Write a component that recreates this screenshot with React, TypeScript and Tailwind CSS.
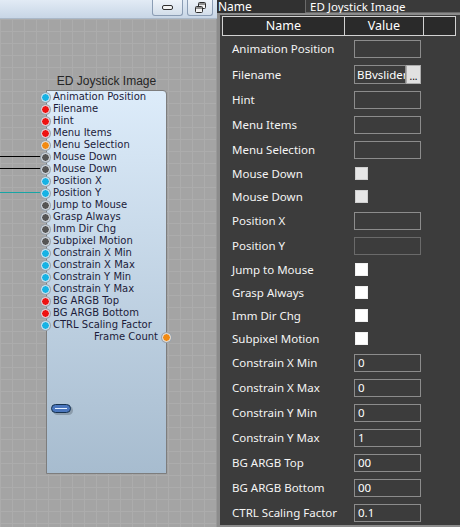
import React from "react";

type PinColor = "cyan" | "red" | "orange" | "gray";

const pinClass: Record<PinColor, string> = {
  cyan: "bg-[#16b2e4]",
  red: "bg-[#ee1111]",
  orange: "bg-[#f28a12]",
  gray: "bg-[#555555]",
};

const inputs: [string, PinColor][] = [
  ["Animation Position", "cyan"],
  ["Filename", "red"],
  ["Hint", "red"],
  ["Menu Items", "red"],
  ["Menu Selection", "orange"],
  ["Mouse Down", "gray"],
  ["Mouse Down", "gray"],
  ["Position X", "cyan"],
  ["Position Y", "cyan"],
  ["Jump to Mouse", "gray"],
  ["Grasp Always", "gray"],
  ["Imm Dir Chg", "gray"],
  ["Subpixel Motion", "gray"],
  ["Constrain X Min", "cyan"],
  ["Constrain X Max", "cyan"],
  ["Constrain Y Min", "cyan"],
  ["Constrain Y Max", "cyan"],
  ["BG ARGB Top", "red"],
  ["BG ARGB Bottom", "red"],
  ["CTRL Scaling Factor", "cyan"],
];

type Prop =
  | { name: string; kind: "text"; value?: string; dim?: boolean }
  | { name: string; kind: "file"; value: string }
  | { name: string; kind: "check"; disabled?: boolean };

const props: Prop[] = [
  { name: "Animation Position", kind: "text" },
  { name: "Filename", kind: "file", value: "BBvslider" },
  { name: "Hint", kind: "text" },
  { name: "Menu Items", kind: "text" },
  { name: "Menu Selection", kind: "text" },
  { name: "Mouse Down", kind: "check", disabled: true },
  { name: "Mouse Down", kind: "check", disabled: true },
  { name: "Position X", kind: "text" },
  { name: "Position Y", kind: "text", dim: true },
  { name: "Jump to Mouse", kind: "check" },
  { name: "Grasp Always", kind: "check" },
  { name: "Imm Dir Chg", kind: "check" },
  { name: "Subpixel Motion", kind: "check" },
  { name: "Constrain X Min", kind: "text", value: "0" },
  { name: "Constrain X Max", kind: "text", value: "0" },
  { name: "Constrain Y Min", kind: "text", value: "0" },
  { name: "Constrain Y Max", kind: "text", value: "1" },
  { name: "BG ARGB Top", kind: "text", value: "00" },
  { name: "BG ARGB Bottom", kind: "text", value: "00" },
  { name: "CTRL Scaling Factor", kind: "text", value: "0.1" },
];

function Pin({ color }: { color: PinColor }) {
  return (
    <span
      className={`h-[9px] w-[9px] shrink-0 rounded-full border border-[#e8eef5] shadow-[0_0_0_1px_#9aa4ae] ${pinClass[color]}`}
    />
  );
}

function Node() {
  return (
    <div className="absolute left-[46px] top-[55px] w-[121px]">
      <div className="mb-[2px] h-[14px] whitespace-nowrap text-center font-['Liberation_Sans',sans-serif] text-[12px] leading-[14px] text-[#262626]">
        ED Joystick Image
      </div>
      <div className="flex h-[384px] flex-col rounded-tr-[4px] border border-[#7d7d7d] bg-gradient-to-b from-[#ddecfa] to-[#a7bccf] font-['DejaVu_Sans',sans-serif] text-[10px] text-[#1c1c3a]">
        {inputs.map(([label, color], i) => (
          <div key={i} className="-ml-[6px] flex h-[12px] items-center gap-[3px] whitespace-nowrap leading-[12px]">
            <Pin color={color} />
            <span>{label}</span>
          </div>
        ))}
        <div className="-mr-[5px] flex h-[12px] items-center justify-end gap-[4px] whitespace-nowrap leading-[12px]">
          <span>Frame Count</span>
          <Pin color="orange" />
        </div>
        {/* joystick preview */}
        <div className="ml-[4px] mt-[61px] flex h-[9px] w-[20px] items-center rounded-full border border-[#16324f] bg-[#4a76bd] px-[3px] shadow-[2px_2px_0_#8b9cac]">
          <span className="h-px w-full bg-[#e6f0ff]" />
        </div>
      </div>
    </div>
  );
}

function Designer() {
  return (
    <div className="flex w-[217px] shrink-0 flex-col">
      <div className="flex h-[19px] justify-end gap-[4px] border-b border-[#aab8c8] bg-gradient-to-b from-[#e2ebf5] to-[#c8d6e6] pr-[4px]">
        <div className="flex h-[16px] w-[31px] items-center justify-center rounded-b-[3px] border border-t-0 border-[#8b9db4] bg-gradient-to-b from-[#eef3f9] to-[#d3deea]">
          <span className="h-[5px] w-[11px] rounded-[2px] border border-[#2e2e2e] bg-[#f4f4f4]" />
        </div>
        <div className="flex h-[16px] w-[26px] items-center justify-center rounded-b-[3px] border border-t-0 border-[#8b9db4] bg-gradient-to-b from-[#eef3f9] to-[#d3deea]">
          <svg width="11" height="11" viewBox="0 0 11 11">
            <rect x="3.5" y="0.5" width="7" height="6" rx="1" fill="#f4f4f4" stroke="#2e2e2e" />
            <rect x="0.5" y="4.5" width="7" height="6" rx="1" fill="#f4f4f4" stroke="#2e2e2e" />
            <line x1="1" y1="6" x2="7" y2="6" stroke="#2e2e2e" />
            <line x1="4" y1="2" x2="10" y2="2" stroke="#2e2e2e" />
          </svg>
        </div>
      </div>
      <div className="relative flex-1 border-r border-[#999] bg-[#a4a4a4] bg-[linear-gradient(to_right,#acacac_1px,transparent_1px),linear-gradient(to_bottom,#acacac_1px,transparent_1px)] bg-[size:12px_12px]">
        {/* wires */}
        <div className="absolute left-0 top-[137px] h-px w-[41px] bg-black" />
        <div className="absolute left-0 top-[149px] h-px w-[41px] bg-black" />
        <div className="absolute left-0 top-[173px] h-px w-[41px] bg-[#17a5a5]" />
        <Node />
      </div>
    </div>
  );
}

function PropRow({ p }: { p: Prop }) {
  const h = p.kind === "check" ? "h-[23px]" : p.kind === "file" ? "h-[26px]" : "h-[25px]";
  return (
    <div className={`flex items-center ${h}`}>
      <div className="w-[132px] whitespace-nowrap pl-[10px] pt-px text-[11.5px] text-[#f4f4f4]">{p.name}</div>
      {p.kind === "text" && (
        <div
          className={`h-[18px] w-[67px] border px-[3px] text-[11.5px] leading-[16px] text-white ${
            p.dim ? "border-[#6a6a6a]" : "border-[#8c8c8c]"
          }`}
        >
          {p.value}
        </div>
      )}
      {p.kind === "file" && (
        <div className="flex h-[19px] w-[67px]">
          <div className="w-[52px] overflow-hidden whitespace-nowrap border border-[#8c8c8c] px-[2px] text-[11.5px] leading-[17px] text-white">
            {p.value}
          </div>
          <div className="flex w-[15px] items-end justify-center border border-[#adadad] bg-[#e1e1e1] pb-[3px] text-[10px] leading-[8px] text-black">
            ...
          </div>
        </div>
      )}
      {p.kind === "check" && (
        <div
          className={`ml-px h-[13px] w-[13px] border ${
            p.disabled ? "border-[#cfcfcf] bg-[#e6e6e6]" : "border-[#f0f0f0] bg-white"
          }`}
        />
      )}
    </div>
  );
}

function PropertyPanel() {
  return (
    <div className="flex flex-1 flex-col bg-[#3c3c3c] font-['Noto_Sans',sans-serif]">
      <div className="flex h-[13px] bg-[#313131] text-white">
        <div className="w-[88px] pl-px text-[12px] leading-[13px]">Name</div>
        <div className="flex-1 whitespace-nowrap border-b border-l border-[#6a6a6a] bg-[#3a3a3a] pl-[4px] text-[11.5px] leading-[13px]">
          ED Joystick Image
        </div>
      </div>
      <div className="flex-1 border-b-2 border-l-[3px] border-t-2 border-[#8c8c8c] pl-[2px] pt-px">
        <div className="flex h-[20px] w-[234px] border border-[#d2d2d2] bg-[#2a2a2a] text-[12.5px] leading-[18px] text-white">
          <div className="w-[121px] text-center">Name</div>
          <div className="w-[79px] border-l border-[#d2d2d2] text-center">Value</div>
          <div className="flex-1 border-l border-[#d2d2d2]" />
        </div>
        {props.map((p, i) => (
          <PropRow key={i} p={p} />
        ))}
      </div>
    </div>
  );
}

export default function App() {
  return (
    <div className="flex h-[527px] w-[460px] overflow-hidden">
      <Designer />
      <PropertyPanel />
    </div>
  );
}
